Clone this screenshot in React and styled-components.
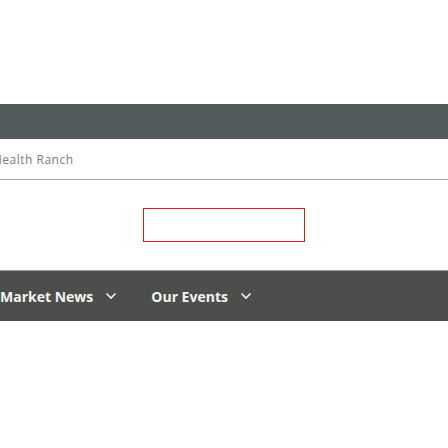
import React from "react";
import styled, { createGlobalStyle } from "styled-components";

const GlobalStyle = createGlobalStyle`
  html, body {
    margin: 0;
    padding: 0;
    background: #ffffff;
    font-family: "Open Sans", Inter, sans-serif;
  }
`;

const Page = styled.div`
  width: 448px;
  height: 448px;
  overflow: hidden;
  padding-top: 104px;
  box-sizing: border-box;
`;

const TopBar = styled.div`
  height: 35px;
  background: #545b5c;
`;

const Crumb = styled.div`
  height: 40px;
  border-bottom: 1px solid #a3a3a3;
  display: flex;
  align-items: center;
  overflow: hidden;
  font-size: 12px;
  font-weight: 500;
  color: #7b7b7b;
`;

const CrumbText = styled.span`
  margin-left: -7px;
  letter-spacing: 0.5px;
`;

const Middle = styled.div`
  height: 90px;
  display: flex;
  justify-content: center;
  padding-top: 28px;
  box-sizing: border-box;
`;

const EmptyBox = styled.div`
  width: 162px;
  height: 34px;
  border: 1px solid #e3161b;
  box-sizing: border-box;
`;

const Nav = styled.nav`
  height: 51px;
  background: #4c4e4b;
  border-top: 1px solid #9a9a9a;
  box-sizing: border-box;
  display: flex;
  align-items: center;
  gap: 34px;
`;

const NavItem = styled.div`
  display: flex;
  align-items: center;
  gap: 12px;
  color: #f4f4f4;
  font-size: 14px;
  font-weight: 700;
  letter-spacing: 0;
`;

const Chevron = () => (
  <svg width="12" height="8" viewBox="0 0 12 8" fill="none">
    <path d="M1.5 1.5 L6 6 L10.5 1.5" stroke="#f4f4f4" strokeWidth="1.6" />
  </svg>
);

export default function App() {
  return (
    <Page>
      <GlobalStyle />
      <TopBar />
      <Crumb>
        <CrumbText>Health Ranch</CrumbText>
      </Crumb>
      <Middle>
        <EmptyBox />
      </Middle>
      <Nav>
        <NavItem>
          Market News <Chevron />
        </NavItem>
        <NavItem>
          Our Events <Chevron />
        </NavItem>
      </Nav>
    </Page>
  );
}
